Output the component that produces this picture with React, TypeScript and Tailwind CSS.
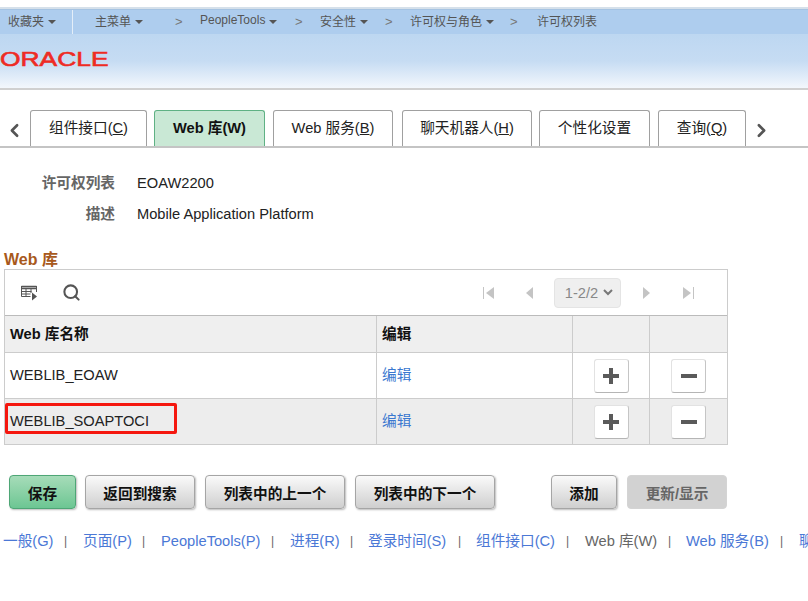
import { ChevronLeft, ChevronRight, Search } from 'lucide-react'

function Caret() {
  return <span className="ml-[4px] inline-block h-0 w-0 border-x-[4px] border-t-[4px] border-x-transparent border-t-[#555]" />
}

function Crumb({ label, caret = true, className = '', labelClass = '' }: { label: string; caret?: boolean; className?: string; labelClass?: string }) {
  return (
    <span className={`flex items-center whitespace-nowrap text-[12px] text-[#555] ${className}`}>
      <span className={labelClass}>{label}</span>
      {caret && <Caret />}
    </span>
  )
}

function Sep({ w }: { w: string }) {
  return <span className={`text-left text-[13px] text-[#777] ${w}`}>&gt;</span>
}

function Tab({ active, width, children }: { active?: boolean; width: string; children: React.ReactNode }) {
  return (
    <div
      className={`flex h-[36px] shrink-0 items-center justify-center rounded-t-[3px] border border-b-0 pb-[2px] text-[14.67px] ${width} ${
        active ? 'border-[#5fb184] bg-[#c9e8d5] font-bold text-[#111]' : 'border-[#a0a0a0] bg-white text-[#222]'
      }`}
    >
      {children}
    </div>
  )
}

function RowButton({ minus }: { minus?: boolean }) {
  return (
    <div className="flex h-[34px] w-[35px] items-center justify-center rounded-[3px] border border-[#e2e2e2] border-b-[#b5b5b5] border-r-[#c5c5c5] bg-white">
      <svg width="16" height="16" viewBox="0 0 16 16">
        {minus ? (
          <rect x="0" y="6" width="16" height="4" fill="#5a5a5a" />
        ) : (
          <path d="M6 0h4v6h6v4h-6v6H6v-6H0V6h6z" fill="#5a5a5a" />
        )}
      </svg>
    </div>
  )
}

function Row({ name, grey }: { name: string; grey?: boolean }) {
  return (
    <div className={`flex h-[46px] border-b border-[#ccc] ${grey ? 'bg-[#ededed]' : 'bg-white'}`}>
      <div className="flex w-[372px] items-center border-r border-[#ccc] pb-[2px] pl-[5px] text-[14.67px] text-[#222]">{name}</div>
      <div className="flex w-[196px] items-center border-r border-[#ccc] pb-[2px] pl-[5px] text-[14.67px] text-[#3a78d0]">编辑</div>
      <div className="flex w-[77px] items-center justify-center border-r border-[#ccc]">
        <RowButton />
      </div>
      <div className="flex w-[77px] items-center justify-center">
        <RowButton minus />
      </div>
    </div>
  )
}

function Btn({ width, kind, children }: { width: string; kind?: 'save' | 'off'; children: React.ReactNode }) {
  const look =
    kind === 'save'
      ? 'border-[#4ea676] bg-gradient-to-b from-[#a6dcb9] to-[#6cc693] text-[#111] font-bold shadow-[1px_1px_2px_#bbb]'
      : kind === 'off'
        ? 'border-[#d4d4d4] bg-[#d2d2d2] text-[#666] font-bold'
        : 'border-[#a5a5a5] bg-gradient-to-b from-[#fafafa] to-[#cfcfcf] text-[#111] font-bold shadow-[1px_1px_2px_#bbb]'
  return (
    <div className={`flex h-[34px] items-center justify-center rounded-[4px] border pt-[3px] text-[14.67px] ${width} ${look}`}>
      {children}
    </div>
  )
}

function FootLink({ label, width, plain }: { label: string; width: string; plain?: boolean }) {
  return (
    <span className={`flex shrink-0 items-center whitespace-nowrap ${width}`}>
      <span className={plain ? 'text-[#666]' : 'text-[#4b78d6]'}>{label}</span>
    </span>
  )
}

function Pipe({ width }: { width: string }) {
  return <span className={`shrink-0 pl-[11px] text-left text-[12px] text-[#666] ${width}`}>|</span>
}

export default function App() {
  return (
    <div className="h-[601px] w-[808px] overflow-hidden bg-white font-['Liberation_Sans','Noto_Sans_CJK_SC',sans-serif]">
      {/* header */}
      <div className="pt-[7px]">
        <div className="h-[2px] bg-[#d5e0ea]" />
        <div className="flex h-[25px] items-center border-t border-[#a5c3e2] bg-[#aecdee]">
          <Crumb label="收藏夹" className="ml-[8px] w-[64px]" />
          <span className="h-full w-px bg-[#e4eef8]" />
          <Crumb label="主菜单" className="ml-[22px] w-[80px]" />
          <Sep w="w-[25px]" />
          <Crumb label="PeopleTools" labelClass="-translate-y-[2px]" className="w-[95px]" />
          <Sep w="w-[25px]" />
          <Crumb label="安全性" className="w-[65px]" />
          <Sep w="w-[25px]" />
          <Crumb label="许可权与角色" className="w-[100px]" />
          <Sep w="w-[27px]" />
          <Crumb label="许可权列表" caret={false} />
        </div>
        <div className="flex h-[56px] items-center overflow-hidden border-b-2 border-[#d0d0d0] bg-gradient-to-b from-[#bdd7f1] via-[#c6dcf3] to-[#f3f7fc] pb-[4px]">
          <span className="origin-left scale-x-[1.32] text-[20px] font-normal leading-none text-[#ee2b24] [-webkit-text-stroke:0.6px_#ee2b24]">
            ORACLE
          </span>
        </div>
      </div>

      {/* tabs */}
      <div className="mt-[20px] flex h-[38px] items-end border-b-2 border-[#c4c4c4] pl-[4px]">
        <ChevronLeft className="mb-[5px] mr-[5px] h-[21px] w-[21px] shrink-0 text-[#555]" strokeWidth={3} />
        <div className="flex">
          <Tab width="w-[117px]">组件接口(<u>C</u>)</Tab>
          <Tab active width="w-[111px] ml-[7px]">Web 库(W)</Tab>
          <Tab width="w-[120px] ml-[8px]">Web 服务(<u>B</u>)</Tab>
          <Tab width="w-[130px] ml-[9px]">聊天机器人(<u>H</u>)</Tab>
          <Tab width="w-[111px] ml-[7px]">个性化设置</Tab>
          <Tab width="w-[88px] ml-[8px]">查询(<u>Q</u>)</Tab>
        </div>
        <ChevronRight className="mb-[5px] ml-[5px] h-[21px] w-[21px] shrink-0 text-[#555]" strokeWidth={3} />
      </div>

      {/* fields */}
      <div className="mt-[27px] flex flex-col gap-[15px] text-[14.67px]">
        <div className="flex h-[16px] items-center">
          <span className="w-[115px] text-right font-bold text-[#666]">许可权列表</span>
          <span className="ml-[22px] text-[#222]">EOAW2200</span>
        </div>
        <div className="flex h-[16px] items-center">
          <span className="w-[115px] text-right font-bold text-[#666]">描述</span>
          <span className="ml-[22px] text-[#222]">Mobile Application Platform</span>
        </div>
      </div>

      {/* grid */}
      <div className="ml-[4px] mt-[29px] text-[16px] font-bold leading-[18px] text-[#a8591c]">Web 库</div>
      <div className="ml-[4px] w-[724px] border border-b-0 border-[#ccc]">
        <div className="flex h-[46px] items-center border-b border-[#bbb] pl-[16px]">
          <svg width="16" height="16" viewBox="0 0 16 16" fill="none" stroke="#555">
            <path d="M0.5 1.5h15M0.5 3.5h15" strokeWidth="1.4" />
            <path d="M0.5 1v10.5h9M5 4v7.5M10 4v4M0.5 6.5h10M0.5 9h9M15.5 1v6" strokeWidth="1" />
            <path d="M11 7.5l5 4-5 4z" fill="#555" stroke="none" />
          </svg>
          <Search className="ml-[25px] h-[19px] w-[19px] shrink-0 text-[#555]" strokeWidth={2.6} />
          <div className="ml-[402px] flex items-center text-[#c4c4c4]">
            <svg width="13" height="14" viewBox="0 0 13 14" fill="#c4c4c4">
              <rect x="0" y="1" width="1" height="12" />
              <path d="M11 1v12L3 7z" />
            </svg>
            <svg className="ml-[29px]" width="9" height="14" viewBox="0 0 9 14" fill="#c4c4c4">
              <path d="M8 1v12L1 7z" />
            </svg>
            <div className="ml-[20px] flex h-[30px] w-[67px] items-center justify-center gap-[5px] rounded-[4px] border border-[#e4e4e4] bg-[#efefef] pl-[3px] text-[14.67px] text-[#888]">
              1-2/2
              <svg width="10" height="7" viewBox="0 0 10 7" fill="none" stroke="#777" strokeWidth="2">
                <path d="M1 1l4 4 4-4" />
              </svg>
            </div>
            <svg className="ml-[21px]" width="9" height="14" viewBox="0 0 9 14" fill="#c4c4c4">
              <path d="M1 1v12l7-6z" />
            </svg>
            <svg className="ml-[31px]" width="13" height="14" viewBox="0 0 13 14" fill="#c4c4c4">
              <path d="M1 1v12l8-6z" />
              <rect x="11" y="1" width="1" height="12" />
            </svg>
          </div>
        </div>
        <div className="flex h-[37px] border-b border-[#ccc] bg-[#efefef] text-[14.67px] font-bold text-[#111]">
          <div className="flex w-[372px] items-center border-r border-[#ccc] pl-[5px]">Web 库名称</div>
          <div className="flex w-[196px] items-center border-r border-[#ccc] pl-[5px]">编辑</div>
          <div className="w-[77px] border-r border-[#ccc]" />
          <div className="w-[77px]" />
        </div>
        <Row name="WEBLIB_EOAW" />
        <div className="relative">
          <Row name="WEBLIB_SOAPTOCI" grey />
          <div className="absolute left-0 top-[4px] h-[31px] w-[172px] rounded-[2px] border-[3px] border-[#f5170f]" />
        </div>
      </div>

      {/* buttons */}
      <div className="ml-[9px] mt-[30px] flex">
        <Btn kind="save" width="w-[67px]">保存</Btn>
        <Btn width="w-[110px] ml-[9px]">返回到搜索</Btn>
        <Btn width="w-[140px] ml-[10px]">列表中的上一个</Btn>
        <Btn width="w-[140px] ml-[10px]">列表中的下一个</Btn>
        <Btn width="w-[66px] ml-[56px]">添加</Btn>
        <Btn kind="off" width="w-[100px] ml-[10px]">更新/显示</Btn>
      </div>

      {/* footer links */}
      <div className="ml-[3px] mt-[22px] flex h-[20px] items-center text-[14.67px]">
        <FootLink label="一般(G)" width="w-[50px]" />
        <Pipe width="w-[30px]" />
        <FootLink label="页面(P)" width="w-[48px]" />
        <Pipe width="w-[30px]" />
        <FootLink label="PeopleTools(P)" width="w-[99px]" />
        <Pipe width="w-[30px]" />
        <FootLink label="进程(R)" width="w-[49px]" />
        <Pipe width="w-[29px]" />
        <FootLink label="登录时间(S)" width="w-[79px]" />
        <Pipe width="w-[29px]" />
        <FootLink label="组件接口(C)" width="w-[79px]" />
        <Pipe width="w-[30px]" />
        <FootLink label="Web 库(W)" width="w-[72px]" plain />
        <Pipe width="w-[29px]" />
        <FootLink label="Web 服务(B)" width="w-[83px]" />
        <Pipe width="w-[30px]" />
        <FootLink label="聊天机器人(H)" width="w-[90px]" />
      </div>
    </div>
  )
}
